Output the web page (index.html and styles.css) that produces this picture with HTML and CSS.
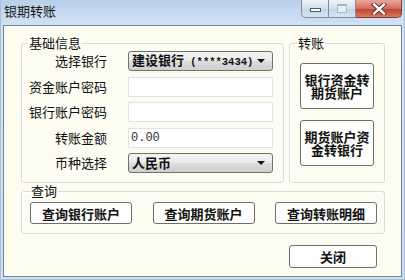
FILE: index.html
```html
<!DOCTYPE html>
<html lang="zh">
<head>
<meta charset="utf-8">
<title>银期转账</title>
<link rel="stylesheet" href="styles.css">
</head>
<body>
<div class="window">
  <div class="titlebar">
    <span class="title">银期转账</span>
    <div class="controls">
      <div class="ctl ctl-min"><span class="min-icon"></span></div>
      <div class="ctl ctl-max"><span class="max-icon"></span></div>
      <div class="ctl ctl-close">
        <svg width="16" height="12" viewBox="0 0 16 12">
          <path d="M3 1.5 L13 10.5 M13 1.5 L3 10.5" stroke="#5a2a24" stroke-width="4.2" stroke-linecap="square"/>
          <path d="M3 1.5 L13 10.5 M13 1.5 L3 10.5" stroke="#ffffff" stroke-width="2.4" stroke-linecap="square"/>
        </svg>
      </div>
    </div>
  </div>
  <div class="client">
    <div class="top-row">
      <fieldset class="group basic">
        <legend>基础信息</legend>
        <div class="form">
          <label class="lbl">选择银行</label>
          <div class="combo"><span class="combo-text">建设银行<span class="mono"> (****3434)</span></span><span class="arrow"></span></div>
          <label class="lbl">资金账户密码</label>
          <div class="input"></div>
          <label class="lbl">银行账户密码</label>
          <div class="input"></div>
          <label class="lbl">转账金额</label>
          <div class="input"><span class="amount">0.00</span></div>
          <label class="lbl">币种选择</label>
          <div class="combo"><span class="combo-text">人民币</span><span class="arrow"></span></div>
        </div>
      </fieldset>
      <fieldset class="group transfer">
        <legend>转账</legend>
        <div class="btn tall"><span class="tall-text">银行资金转<br>期货账户</span></div>
        <div class="btn tall"><span class="tall-text">期货账户资<br>金转银行</span></div>
      </fieldset>
    </div>
    <fieldset class="group query">
      <legend>查询</legend>
      <div class="btn wide">查询银行账户</div>
      <div class="btn wide">查询期货账户</div>
      <div class="btn wide">查询转账明细</div>
    </fieldset>
    <div class="footer">
      <div class="btn close-btn">关闭</div>
    </div>
  </div>
</div>
</body>
</html>
```

FILE: styles.css
```css
* { box-sizing: border-box; }
html, body { margin: 0; padding: 0; }
body {
  width: 405px;
  height: 280px;
  overflow: hidden;
  font-family: "Noto Sans CJK SC", "Noto Sans", sans-serif;
  font-size: 13px;
  color: #111;
}
.window {
  width: 405px;
  height: 280px;
  display: flex;
  flex-direction: column;
  background: linear-gradient(#b9d0ea 0px, #cfe0f3 22px, #d6e5f5 40px, #cfdff1 280px);
  border-left: 1px solid #a9bfd8;
  border-right: 1px solid #a9bfd8;
  border-bottom: 1px solid #a9bfd8;
}
.titlebar {
  height: 25px;
  flex: none;
  display: flex;
  justify-content: space-between;
  align-items: flex-start;
  padding-left: 3px;
  padding-right: 2px;
}
.title {
  line-height: 22px;
  font-size: 13px;
  color: #1a1a1a;
}
.controls {
  display: flex;
  height: 18px;
}
.ctl {
  height: 18px;
  display: flex;
  align-items: center;
  justify-content: center;
  border: 1px solid #7d8ea3;
  border-top: none;
}
.ctl-min {
  width: 27px;
  border-radius: 0 0 0 5px;
  border-right: none;
  background: linear-gradient(#eef3f9, #d5e0ec 50%, #c3d2e3 51%, #d9e5f2);
}
.ctl-max {
  width: 28px;
  background: linear-gradient(#eef3f9, #d5e0ec 50%, #c3d2e3 51%, #d9e5f2);
}
.ctl-close {
  width: 46px;
  border-radius: 0 0 5px 0;
  border-left: none;
  border-color: #8a3a30;
  background: linear-gradient(#e8a89c, #d36e5e 50%, #c2402d 51%, #d77a63);
}
.min-icon {
  width: 11px;
  height: 4px;
  background: #fff;
  border: 1px solid #4a5a6e;
  margin-top: 3px;
}
.max-icon {
  width: 10px;
  height: 9px;
  border: 1px solid #a8b6c6;
  border-top-width: 2px;
  background: #e6edf5;
}
.client {
  flex: 1;
  margin: 0 2px 2px 2px;
  border: 1px solid #71849a;
  background: #fcfcf1;
  padding: 10px 16px 0 17px;
  display: flex;
  flex-direction: column;
}
.top-row {
  display: flex;
  gap: 5px;
}
.group {
  margin: 0;
  border: 1px solid #dcdcd4;
  border-radius: 3px;
  box-shadow: inset 1px 1px 0 #ffffff, 1px 1px 0 #ffffff;
  min-width: 0;
}
.group legend {
  padding: 0 1px;
  line-height: 14px;
  font-size: 13px;
  color: #111;
}
.basic {
  width: 263px;
  height: 147px;
  padding: 1px 10px 0 6px;
}
.form {
  display: grid;
  grid-template-columns: 79px 145px;
  grid-auto-rows: 20px;
  column-gap: 21px;
  row-gap: 5.5px;
}
.lbl {
  text-align: right;
  line-height: 20px;
  white-space: nowrap;
}
.combo {
  border: 1px solid #707070;
  border-radius: 3px;
  background: linear-gradient(#f4f4f4, #e9e9e9 50%, #dcdcdc 51%, #d0d0d0);
  display: flex;
  align-items: center;
  justify-content: space-between;
  padding: 0 7px 0 3px;
  font-weight: bold;
}
.combo-text {
  line-height: 18px;
  white-space: nowrap;
}
.mono {
  font-family: "Liberation Mono", monospace;
  font-size: 10.5px;
}
.arrow {
  width: 0;
  height: 0;
  border-left: 4px solid transparent;
  border-right: 4px solid transparent;
  border-top: 4px solid #111;
}
.input {
  border: 1px solid #e1e2e4;
  background: #ffffff;
  display: flex;
  align-items: center;
  padding-left: 2px;
}
.amount {
  font-family: "Liberation Mono", monospace;
  font-size: 12px;
  color: #333;
}
.transfer {
  width: 96px;
  height: 147px;
  padding: 13px 0 0 7px;
  display: flex;
  flex-direction: column;
  align-items: center;
  gap: 11px;
}
.btn {
  border: 1px solid #6e6e6e;
  border-radius: 3px;
  background: #fdfdfb;
  font-weight: bold;
  display: flex;
  align-items: center;
  justify-content: center;
  text-align: center;
  white-space: nowrap;
}
.tall {
  width: 74px;
  height: 46px;
  margin-left: -7px;
}
.tall-text {
  line-height: 13px;
}
.query {
  margin-top: 1px;
  width: 364px;
  height: 50px;
  padding: 4px 7px 0 8px;
  display: flex;
  justify-content: space-between;
  align-items: flex-start;
}
.wide {
  width: 102px;
  height: 22px;
}
.footer {
  display: flex;
  justify-content: flex-end;
  padding-top: 11px;
  padding-right: 8px;
}
.close-btn {
  width: 88px;
  height: 23px;
}
```
